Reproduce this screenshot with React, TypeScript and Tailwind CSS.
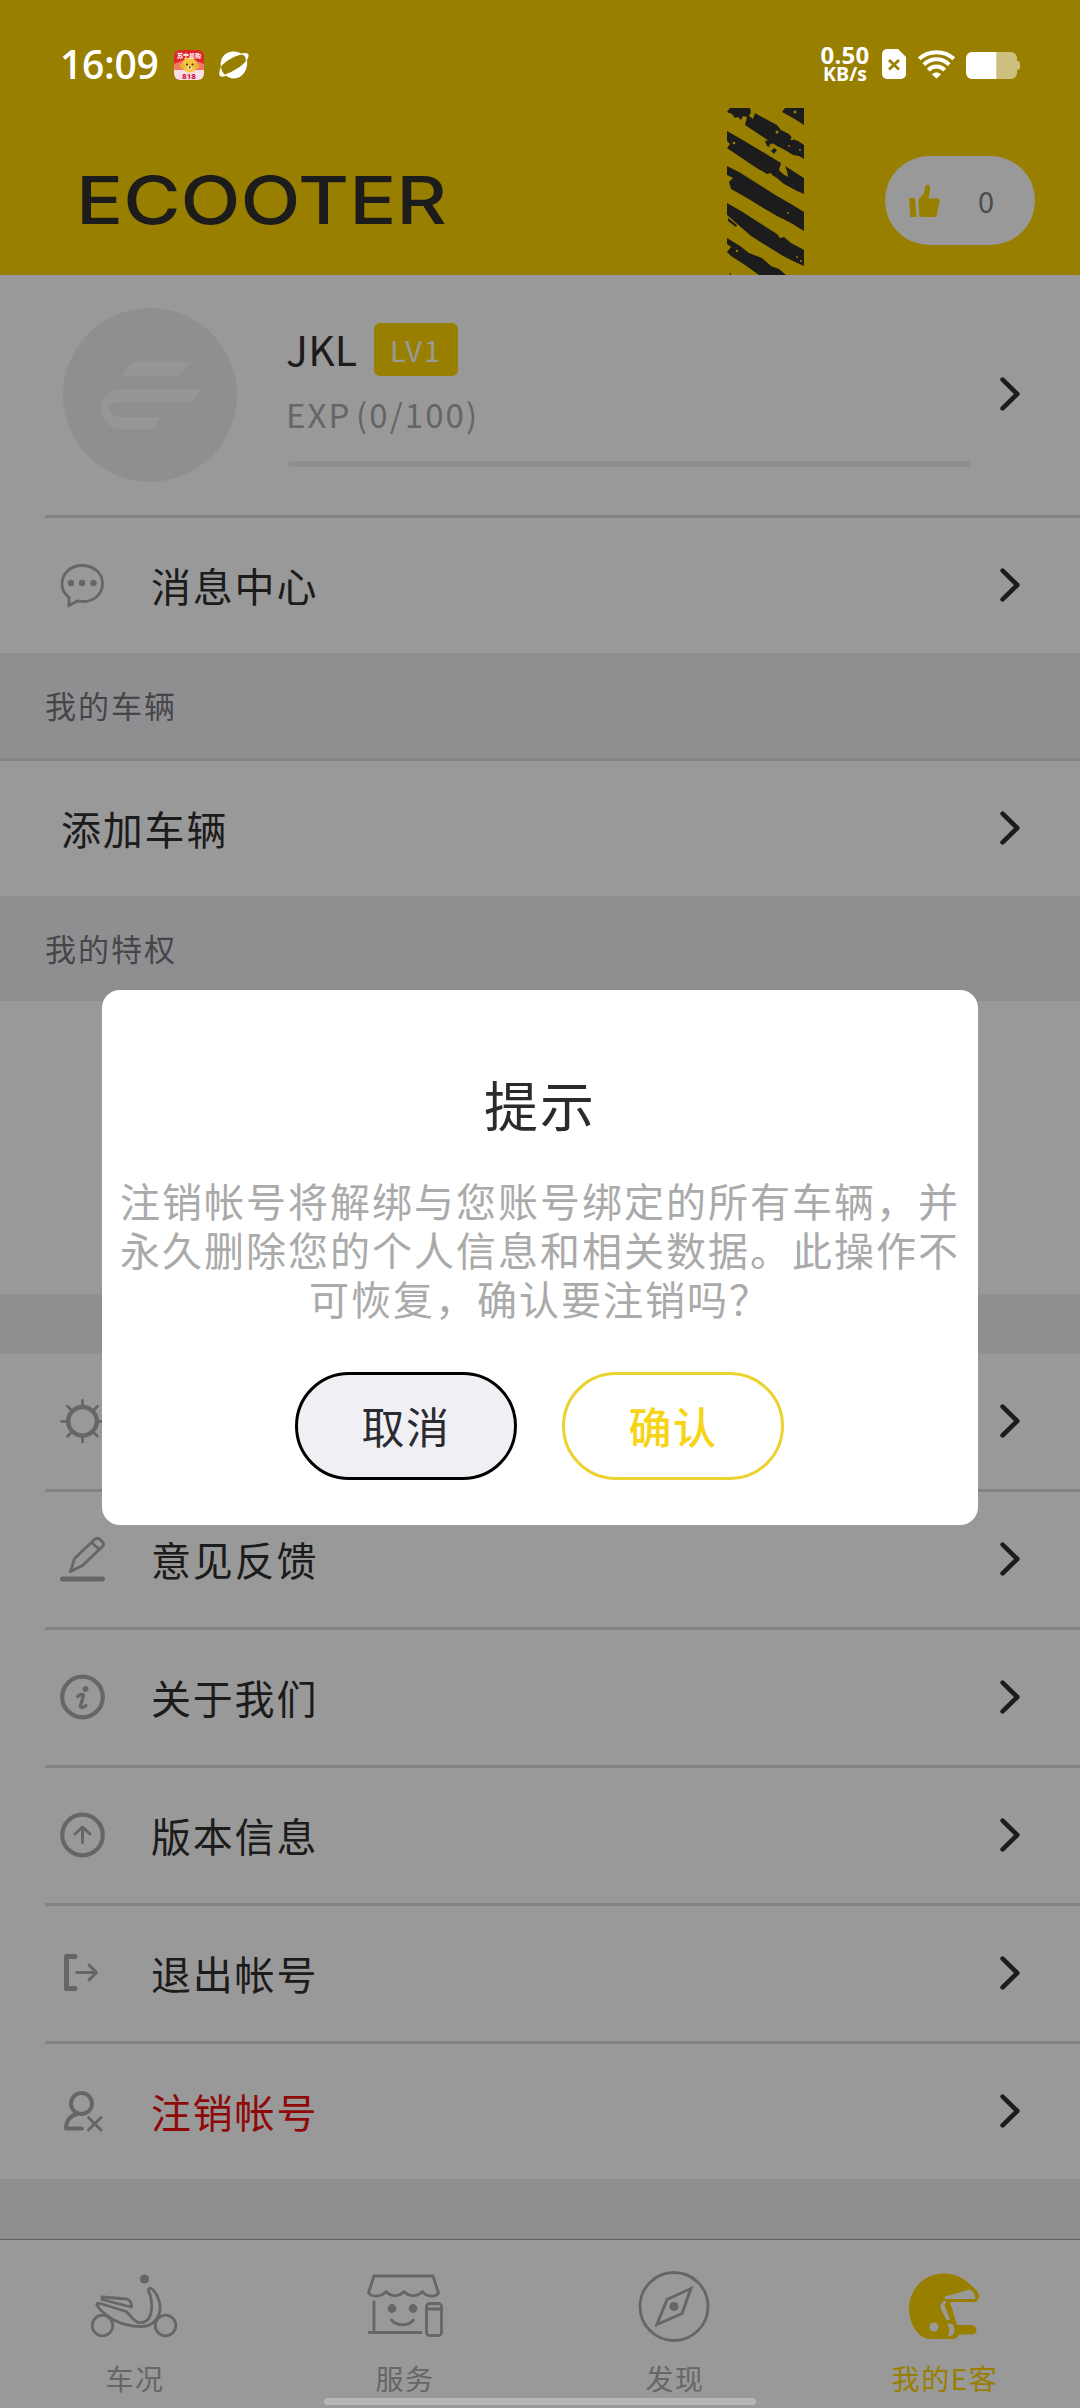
import type { ReactNode } from 'react'

const ICON_GREY = '#aaaaaa'

function StatusBar() {
  return (
    <div className="relative z-20 h-[108px] flex items-start justify-between pl-[60px] pr-[60px] pt-[46px] text-white">
      <div className="flex items-center">
        <span className="w-[98px] h-[37px] leading-[35px] text-[39px] font-semibold tracking-[-0.3px] font-['Open_Sans',sans-serif]">16:09</span>

        <svg width="30" height="30" viewBox="0 0 30 30" className="ml-[16px]">
          <defs>
            <clipPath id="promo"><rect width="30" height="30" rx="6" /></clipPath>
          </defs>
          <g clipPath="url(#promo)">
            <rect width="30" height="30" fill="#e0282c" />
            <path d="M0 14 L10 10 H20 L30 14 V22 H0z" fill="#f07a62" />
            <rect y="20" width="30" height="10" fill="#f6dfe6" />
            <circle cx="15.5" cy="15" r="7.6" fill="#f7c544" />
            <circle cx="8.5" cy="16" r="2.5" fill="#eeb23a" />
            <circle cx="22.5" cy="16" r="2.5" fill="#eeb23a" />
            <circle cx="13" cy="14.5" r="1" fill="#3a2410" />
            <circle cx="18.5" cy="14.5" r="1" fill="#3a2410" />
            <ellipse cx="15.8" cy="18" rx="2.4" ry="1.8" fill="#fbe9c0" />
            <circle cx="15.8" cy="17.5" r="0.9" fill="#3a2410" />
            <text x="15" y="7.6" textAnchor="middle" fontSize="6" fill="#ffffff" fontFamily="Noto Sans CJK SC, sans-serif" fontWeight="700">苏宁易购</text>
            <text x="15" y="28.8" textAnchor="middle" fontSize="8" fill="#d5133f" fontFamily="Roboto, sans-serif" fontWeight="900">818</text>
          </g>
        </svg>

        <svg width="30" height="28" viewBox="0 0 30 28" className="ml-[15px]" fill="#ffffff">
          <path d="M1.8 16 C0.5 6 7 0.5 14.5 0.5 C18 0.5 20.5 1.5 22 2.6 L23.5 3.6 C16 4.5 6 10.5 1.8 16z" />
          <path d="M21.5 2.8 C26 1.2 30 2 29.6 4.5 C29.3 7 28 9 26.5 10.8 C27.2 7 26.5 4.5 21.5 2.8z" />
          <path d="M28 9 C29.5 19 23 27.5 15 27.5 C11.5 27.5 8.5 26.2 6 23.6 C14 20.5 23 15.5 28 9z" />
          <path d="M2 15.5 C2.2 19.5 4 22.5 7.3 24.8 C3.5 26.4 -0.2 26 0.2 22.8 C0.4 20.5 1 18 2 15.5z" />
        </svg>
      </div>

      <div className="flex items-start">
        <div className="flex flex-col items-center w-[50px] font-['Open_Sans',sans-serif] font-bold">
          <span className="h-[19px] leading-[17px] text-[24px] tracking-[0.2px]">0.50</span>
          <span className="h-[18px] leading-[18px] text-[19.5px]">KB/s</span>
        </div>

        <svg width="24" height="30" viewBox="0 0 24 30" className="ml-[12px] mt-[3px]">
          <path d="M5 0H16L24 8V25a5 5 0 0 1-5 5H5a5 5 0 0 1-5-5V5a5 5 0 0 1 5-5z" fill="#ffffff" />
          <path d="M7 11l10 9.5M17 11L7 20.5" stroke="#997f00" strokeWidth="2.8" />
        </svg>

        <svg width="37" height="29" viewBox="0 0 37 29" className="ml-[12px] mt-[4px]" fill="none" stroke="#ffffff" strokeWidth="4">
          <path d="M1.2 8.8 C10.5 0 26.5 0 35.8 8.8" />
          <path d="M5.8 14.6 C13 7.6 24 7.6 31.2 14.6" />
          <path d="M10.3 20.2 C15 15.4 22 15.4 26.7 20.2" />
          <path d="M14 24.4 C16.5 21.8 20.5 21.8 23 24.4 L18.5 28.5z" fill="#ffffff" stroke="none" />
        </svg>

        <svg width="54" height="27" viewBox="0 0 54 27" className="ml-[11px] mt-[6px]">
          <path d="M30.5 0H45a6 6 0 0 1 6 6V9c2 0 3 1 3 2.5V15.5c0 1.5-1 2.5-3 2.5V21a6 6 0 0 1-6 6H30.5z" fill="#ccbf80" />
          <path d="M6 0H30.5V27H6a6 6 0 0 1-6-6V6a6 6 0 0 1 6-6z" fill="#ffffff" />
        </svg>
      </div>
    </div>
  )
}

// Bande de chantier usée
function HazardStripes() {
  return (
    <svg width="77" height="167" viewBox="0 0 77 167" className="ml-[283px]">
      <g fill="#2f2f2f">
        <path d="M3 0H23L24 4L22 8L26 11L28 5L33 8L50 17L54 22L62 26L66 31L71 33L77 37V51L72 48L66 47L58 42L50 38L36 29L18 17L20 9L16 8L14 12L11 9L8 10L5 6L0 4z" />
        <path d="M58 0H77V17L66 10L55 4z" />
        <path d="M0 23L14 31L54 55L52 62L56 66L61 69L60 63L58 58L77 70V86L70 83L57 76L50 70L45 67L44 65L40 66L28 59L0 40L3 36L0 33z" />
        <path d="M0 58L12 64L50 88L64 96L77 104V123L64 115L50 108L38 101L20 90L4 81L2 74L6 70L0 67z" />
        <path d="M0 95L14 103L50 126L53 130L57 129L64 135L77 142V158L68 154L56 148L40 138L24 128L8 114L0 107z" />
        <path d="M1 110L10 117L9 119L1 113z" />
        <path d="M0 130L13 138L22 145L35 150L44 158L52 161L59 167H32L18 157L4 148L0 144L4 139L0 136z" />
        <path d="M38 33L42 32L46 35L42 37L43 39L40 38z" />
        <path d="M47 40L50 42L47 46L44 43z" />
        <path d="M2 166l2-1v2z" />
      </g>
      <g fill="#ffd400">
        <circle cx="50" cy="24" r="1.5" />
        <circle cx="65" cy="31" r="1.3" />
        <circle cx="62" cy="38" r="0.9" />
        <circle cx="73" cy="42" r="1" />
        <circle cx="7" cy="35" r="1.3" />
        <circle cx="68" cy="4" r="1.5" />
        <circle cx="61" cy="105" r="0.9" />
        <circle cx="10" cy="143" r="1.2" />
        <circle cx="70" cy="149" r="0.9" />
        <circle cx="74" cy="153" r="1" />
      </g>
    </svg>
  )
}

function Header() {
  return (
    <header className="h-[275px] bg-[#ffd400]">
      <StatusBar />
      <div className="h-[167px] flex items-start">
        <svg width="363" height="50" viewBox="0 0 363 50" className="ml-[81px] mt-[67px] overflow-visible">
          <text x="-5" y="49" textLength="371" lengthAdjust="spacingAndGlyphs" fontSize="66" fontWeight="500" fill="#2f2f2f" fontFamily="Inter, sans-serif">ECOOTER</text>
        </svg>
        <HazardStripes />
        <div className="ml-[81px] mt-[48px] w-[150px] h-[89px] rounded-full bg-white flex items-center pl-[24px]">
          <svg width="31" height="33" viewBox="0 0 31 33" fill="#ffd400">
            <path d="M0 14H6L7.5 33H1.5z" />
            <path d="M9.5 15.5L15 9.5C16 7 15.5 0.5 18.5 0.5C21.5 0.5 21.5 5 20.5 8.5L19.5 14.5H28.5C30.5 14.5 31 16 30.5 18L28 30.5C27.5 32.5 26.5 33 25 33H13C11 33 10 31.8 10 30z" />
          </svg>
          <span className="ml-[38px] -mt-[2px] text-[29px] leading-[40px] text-[#808080]">0</span>
        </div>
      </div>
    </header>
  )
}

function Chevron() {
  return (
    <svg width="20" height="34" viewBox="0 0 20 34" className="ml-auto mr-[60px] mb-[2px] shrink-0" fill="none" stroke="#2f2f2f" strokeWidth="4.6" strokeLinecap="round" strokeLinejoin="round">
      <path d="M2.6 2.6L17.3 17L2.6 31.4" />
    </svg>
  )
}

function Profile() {
  return (
    <div className="h-[240px] flex items-center bg-white">
      <svg width="174" height="174" viewBox="0 0 174 174" className="ml-[63px]">
        <circle cx="87" cy="87" r="87" fill="#efefef" />
        <g fill="#fafafa">
          <path d="M127 54H75C66 54 63 60 60 68H111C119 68 123 60 127 54z" />
          <path d="M137 81H61C46 81 38 90 38 101C38 113 46 121 61 121H90L98 109H62C54 109 46 107 46 101C46 96 52 94 60 94H127C132 94 134 87 137 81z" />
        </g>
      </svg>
      <div className="ml-[49px] w-[684px] flex flex-col">
        <div className="flex items-start">
          <span className="w-[71px] -mt-[1px] text-[41px] leading-[53px] tracking-[0.2px] text-[#2f2f2f]">JKL</span>
          <span className="ml-[17px] w-[84px] h-[53px] rounded-[6px] bg-[#ffd400] text-center text-[29px] leading-[52px] tracking-[2px] text-white">LV1</span>
        </div>
        <span className="mt-[15px] text-[33px] leading-[46px] tracking-[2.1px] [word-spacing:-5px] text-[#aaaaaa]">EXP (0/100)</span>
        <div className="mt-[24px] ml-[2px] h-[6px] rounded-full bg-[#efefef]" />
      </div>
      <Chevron />
    </div>
  )
}

function Divider() {
  return <div className="h-[3px] bg-white pl-[45px]"><div className="h-full bg-[#dadada]" /></div>
}

function SectionTitle({ children }: { children: ReactNode }) {
  return (
    <div className="h-[105px] flex items-center pl-[45px] bg-[#efeff4]">
      <span className="-mt-[2px] text-[31px] leading-[40px] tracking-[2px] text-[#76767b]">{children}</span>
    </div>
  )
}

function MenuRow({ icon, label, danger }: { icon: ReactNode; label: string; danger?: boolean }) {
  return (
    <div className="h-[135px] flex items-center bg-white">
      <svg width="46" height="46" viewBox="0 0 46 46" className="ml-[60px] mr-[45px] mb-[1px] shrink-0" fill="none" stroke={ICON_GREY} strokeWidth="4" strokeLinecap="round" strokeLinejoin="round">
        {icon}
      </svg>
      <span className={`mb-px text-[40px] leading-[56px] tracking-[1.8px] ${danger ? 'text-[#ee1010]' : 'text-[#2f2f2f]'}`}>{label}</span>
      <Chevron />
    </div>
  )
}

const messageIcon = (
  <>
    <path d="M9 43.5V35.5C4.5 32 2 27.5 2 22C2 11 11 3.5 22 3.5C33.5 3.5 42.5 11 42.5 21.5C42.5 32 34 39.5 23 39.5C20 39.5 18.5 39 17.5 39z" strokeWidth="2.8" strokeLinejoin="miter" />
    <g fill={ICON_GREY} stroke="none">
      <circle cx="11" cy="21" r="3.2" />
      <circle cx="22" cy="21" r="3.2" />
      <circle cx="33.5" cy="21" r="3.2" />
    </g>
  </>
)

const menu = [
  {
    label: '设置',
    icon: (
      <>
        <circle cx="22.5" cy="23.3" r="14.3" strokeWidth="4.4" />
        <path d="M22.5 8V2.5M22.5 38.5V44M7.5 23.3H1.5M37.5 23.3H43.5M11.5 12.3L7.5 8.3M33.5 12.3L37.5 8.3M11.5 34.3L7.5 38.3M33.5 34.3L37.5 38.3" strokeWidth="2.8" />
      </>
    ),
  },
  {
    label: '意见反馈',
    icon: (
      <>
        <path d="M10.5 35.5L14.5 22.5L34.5 3.5C36.5 2 38.5 2 40 3.5L42.5 6C44 7.5 44 9 42.5 10.5L22.5 29.5zM31.5 6.5L39.5 13.5" strokeWidth="2.8" />
        <path d="M2.5 43H42.5" strokeWidth="5" />
      </>
    ),
  },
  {
    label: '关于我们',
    icon: (
      <>
        <circle cx="22.5" cy="23" r="20.3" strokeWidth="4.2" />
        <circle cx="25.5" cy="15" r="3" fill={ICON_GREY} stroke="none" />
        <path d="M17.5 22.5C20 20.5 23 19.5 23.5 21.5L20.5 31.5C20.5 34.5 23 34 26 31.5" strokeWidth="3.4" />
      </>
    ),
  },
  {
    label: '版本信息',
    icon: (
      <>
        <circle cx="22.5" cy="23" r="20.3" strokeWidth="4.2" />
        <path d="M22.5 30.5V15.5M15 22L22.5 15L30 22" strokeWidth="3" />
      </>
    ),
  },
  {
    label: '退出帐号',
    icon: (
      <>
        <path d="M15 6.5H6.5V38.5H15" strokeWidth="5" />
        <path d="M16.5 22.5H36M29 15L36.5 22.5L29 30" strokeWidth="3" />
      </>
    ),
  },
  {
    label: '注销帐号',
    danger: true,
    icon: (
      <>
        <circle cx="21.5" cy="15.5" r="10.5" strokeWidth="4" />
        <path d="M17 26C10 28 6 33 6 40.5H22" strokeWidth="4" />
        <path d="M28.5 29.5L41 42M41 29.5L28.5 42" strokeWidth="3" />
      </>
    ),
  },
]

const tabs = [
  {
    label: '车况',
    icon: (
      <g fill="none" stroke={ICON_GREY} strokeWidth="2.8" strokeLinejoin="round">
        <circle cx="54.5" cy="10" r="4.6" fill={ICON_GREY} stroke="none" />
        <circle cx="12.5" cy="56.5" r="10.3" />
        <circle cx="75.5" cy="56.5" r="10.3" />
        <path d="M12 28L37 30C40 31 41.5 34 41.5 38L35 36.5L12 30.5z" />
        <path d="M23 50.5C16 46 9 41 7 36C6 34 9 34 12 35L36 42.5C40 45 41 50 48 53.5C56 54 59 51 61 44C63 35 60.5 26 58.5 22C58 18.5 61 18 64 22C71 31 72 42 67 49C63 56 57 57.5 51 57.5C41 57.5 31 55 23 50.5z" />
      </g>
    ),
  },
  {
    label: '服务',
    icon: (
      <g fill="none" stroke={ICON_GREY} strokeWidth="2.8" strokeLinecap="round" strokeLinejoin="round">
        <path d="M14 7H73L78.5 24C76 28.5 66 28 62.5 22.5C57 28 49 28 44 22.5C39 28 31 28 26 22.5C22 28 12 28.5 8.5 24z" />
        <path d="M14 33V63M9 63.5H61" />
        <circle cx="32" cy="39.5" r="4.4" fill={ICON_GREY} stroke="none" />
        <circle cx="53" cy="39.5" r="4.4" fill={ICON_GREY} stroke="none" />
        <path d="M31.5 51C37 57.5 48 57.5 53.5 51" />
        <rect x="66.5" y="34.5" width="15" height="32" rx="3" />
        <path d="M66.5 40H81.5" />
      </g>
    ),
  },
  {
    label: '发现',
    icon: (
      <g fill="none" stroke={ICON_GREY} strokeWidth="2.8">
        <circle cx="44" cy="37.5" r="34" />
        <path d="M61 19.5L37 30.5L27 55.5L52 44.5z" strokeWidth="3" />
        <circle cx="44" cy="37.5" r="4.6" fill={ICON_GREY} stroke="none" />
      </g>
    ),
  },
  {
    label: '我的E客',
    active: true,
    icon: (
      <g>
        <path d="M44 4.5C61 4.5 70 15 77 22C80.5 26 79 33 74 33H50L57 56H72C78 57 78 65.5 72 65.5H59C58 68 56 70 52 70H30C19 70 9 55 9 40C9 20 24 4.5 44 4.5z" fill="#ffd400" />
        <path d="M45 27.5L70 20.5C73 22 76 27 75 30H46C44.5 29.5 43.5 28.5 45 27.5z" fill="#ffffff" />
        <path d="M41 35L43.5 32L46.5 32L44.5 36L50 51H46.5L40.5 39z" fill="#ffffff" />
        <path d="M47 55L52 54.5C55 58 55 63 53 66L48 67.5C50 63 50 59 47 55z" fill="#ffffff" />
        <circle cx="34" cy="58" r="4.6" fill="#ffffff" />
      </g>
    ),
  },
]

function TabBar() {
  return (
    <nav className="h-[169px] border-t border-[#a0a0a0] bg-white flex">
      {tabs.map((tab) => (
        <div key={tab.label} className="flex-1 flex flex-col items-center pt-[29px]">
          <svg width="90" height="76" viewBox="0 0 90 76">{tab.icon}</svg>
          <span className={`mt-[14px] text-[28px] leading-[38px] tracking-[1.6px] ${tab.active ? 'text-[#ffd400]' : 'text-[#aaaaaa]'}`}>{tab.label}</span>
        </div>
      ))}
    </nav>
  )
}

function ConfirmDialog() {
  return (
    <div className="absolute inset-0 z-10 bg-black/40 flex items-center justify-center pt-[107px]">
      <div className="w-[876px] h-[535px] rounded-[18px] bg-white flex flex-col items-center">
        <h2 className="mt-[74px] text-[54px] leading-[80px] tracking-[2px] text-[#2b2b2b]">提示</h2>
        <p className="mt-[32px] w-[842px] text-center text-[40px] leading-[49px] tracking-[2px] text-[#aaaaaa]">
          注销帐号将解绑与您账号绑定的所有车辆，并
          <br />
          永久删除您的个人信息和相关数据。此操作不
          <br />
          可恢复，确认要注销吗？
        </p>
        <div className="mt-[49px] mr-[1px] flex gap-[45px]">
          <button className="w-[222px] h-[108px] pb-[2px] rounded-full border-3 border-black bg-[#efeff4] text-[43px] tracking-[1.6px] text-[#2b2b2f]">取消</button>
          <button className="w-[222px] h-[108px] pb-[2px] rounded-full border-3 border-[#ebd22e] bg-white text-[43px] font-medium tracking-[1.6px] text-[#f7d416]">确认</button>
        </div>
      </div>
    </div>
  )
}

export default function App() {
  return (
    <div className="relative w-[1080px] h-[2408px] overflow-hidden bg-[#efeff4] font-['Noto_Sans_CJK_SC',sans-serif]">
      <Header />
      <Profile />
      <Divider />
      <MenuRow icon={messageIcon} label="消息中心" />

      {/* Véhicules */}
      <SectionTitle>我的车辆</SectionTitle>
      <div className="h-[3px] bg-[#dadada]" />
      <div className="h-[135px] flex items-center bg-white pl-[61px]">
        <span className="mb-px text-[40px] leading-[56px] tracking-[1.8px] text-[#2f2f2f]">添加车辆</span>
        <Chevron />
      </div>

      {/* Privilèges */}
      <SectionTitle>我的特权</SectionTitle>
      <div className="h-[293px] bg-white" />

      <div className="mt-[60px]">
        {menu.map((item, index) => (
          <div key={item.label}>
            {index > 0 && <Divider />}
            <MenuRow icon={item.icon} label={item.label} danger={item.danger} />
          </div>
        ))}
      </div>

      <div className="h-[60px]" />
      <TabBar />

      <ConfirmDialog />
      <div className="absolute z-20 left-[324px] top-[2398px] w-[432px] h-[7px] rounded-full bg-[#b6b6b6]" />
    </div>
  )
}
